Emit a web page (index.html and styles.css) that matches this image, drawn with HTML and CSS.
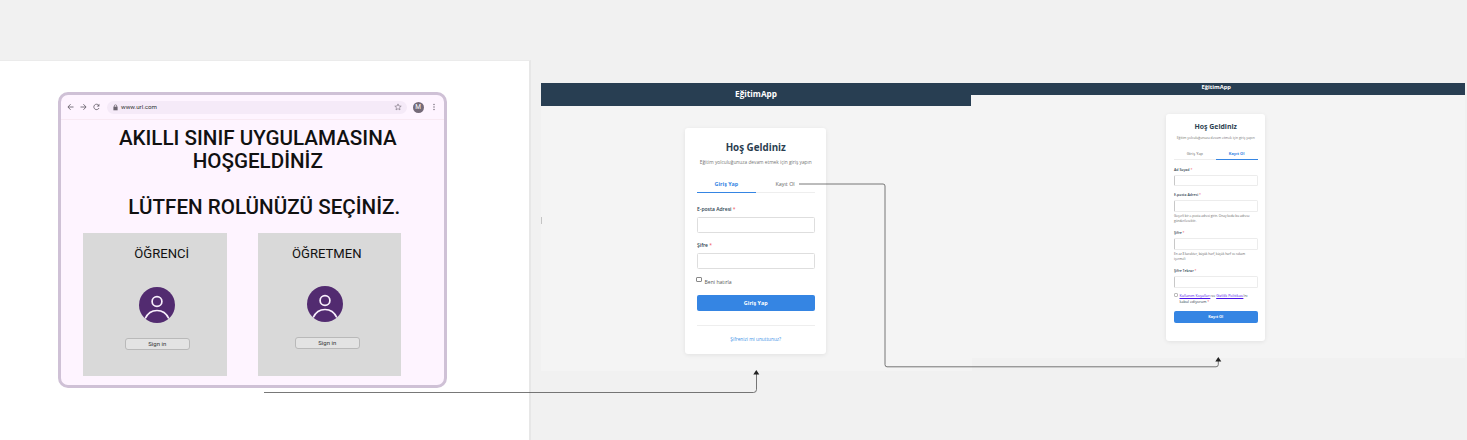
FILE: index.html
```html
<!DOCTYPE html>
<html lang="tr">
<head>
<meta charset="utf-8">
<title>EğitimApp</title>
<link rel="stylesheet" href="styles.css">
</head>
<body>
<main class="canvas">
  <section class="board">
    <div class="browser">
      <div class="toolbar">
        <svg class="nav" viewBox="0 0 36 10"><g fill="none" stroke="#6b646f" stroke-width=".9"><path d="M6.500 5H1M3.600 2.200.9 5l2.700 2.800M13.500 5H19M16.400 2.200 19.100 5l-2.700 2.800"/><path d="M31.600 3.200A2.700 2.700 0 1 0 32 6"/></g><path fill="#6b646f" d="M32.400 1.800v2.700h-2.700z"/></svg>
        <div class="url">
          <svg class="lock" viewBox="0 0 5 7"><path fill="#6b646f" d="M.4 2.700h4.200v3.600H.4z"/><path d="M1.300 3V2a1.200 1.200 0 0 1 2.400 0v1" fill="none" stroke="#6b646f" stroke-width=".7"/></svg>
          <span>www.url.com</span>
          <svg class="star" viewBox="0 0 8 8"><path d="m4 .9.900 2.100 2.300.2-1.700 1.500.5 2.200-2-1.200-2 1.200.5-2.200L.8 3.200l2.300-.2z" fill="none" stroke="#857d89" stroke-width=".7"/></svg>
        </div>
        <div class="user">M</div>
        <svg class="dots" viewBox="0 0 4 8" fill="#6b646f"><circle cx="2" cy="1.500" r=".7"/><circle cx="2" cy="4" r=".7"/><circle cx="2" cy="6.500" r=".7"/></svg>
      </div>
      <h1 class="welcome">AKILLI SINIF UYGULAMASINA<br>HOŞGELDİNİZ</h1>
      <h2 class="prompt">LÜTFEN ROLÜNÜZÜ SEÇİNİZ.</h2>
      <div class="roles">
        <div class="role student">
          <h3>ÖĞRENCİ</h3>
          <svg class="avatar" viewBox="0 0 36 36"><circle cx="18" cy="18" r="18" fill="#522b70"/><g fill="none" stroke="#f8effc" stroke-width="1.700"><circle cx="18" cy="14.500" r="4.900"/><path d="M6.200 31.500C8.500 26.500 12.800 23.500 18 23.500s9.500 3 11.800 8"/></g></svg>
          <button class="signin">Sign in</button>
        </div>
        <div class="role teacher">
          <h3>ÖĞRETMEN</h3>
          <svg class="avatar" viewBox="0 0 36 36"><circle cx="18" cy="18" r="18" fill="#522b70"/><g fill="none" stroke="#f8effc" stroke-width="1.700"><circle cx="18" cy="14.500" r="4.900"/><path d="M6.200 31.500C8.500 26.500 12.800 23.500 18 23.500s9.500 3 11.800 8"/></g></svg>
          <button class="signin">Sign in</button>
        </div>
      </div>
    </div>
  </section>

  <section class="app login">
    <header class="appbar">EğitimApp</header>
    <i class="handle"></i>
    <div class="card">
      <h2 class="title">Hoş Geldiniz</h2>
      <p class="sub">Eğitim yolculuğunuza devam etmek için giriş yapın</p>
      <div class="tabs"><span class="tab active">Giriş Yap</span><span class="tab">Kayıt Ol</span></div>
      <label class="label">E-posta Adresi <b>*</b></label>
      <div class="input"></div>
      <label class="label">Şifre <b>*</b></label>
      <div class="input"></div>
      <div class="check"><i class="box"></i><span>Beni hatırla</span></div>
      <button class="submit">Giriş Yap</button>
      <div class="foot"><a>Şifrenizi mi unuttunuz?</a></div>
    </div>
  </section>

  <section class="app signup">
    <header class="appbar">EğitimApp</header>
    <div class="card">
      <h2 class="title">Hoş Geldiniz</h2>
      <p class="sub">Eğitim yolculuğunuza devam etmek için giriş yapın</p>
      <div class="tabs"><span class="tab">Giriş Yap</span><span class="tab active">Kayıt Ol</span></div>
      <label class="label">Ad Soyad <b>*</b></label>
      <div class="input"></div>
      <label class="label">E-posta Adresi <b>*</b></label>
      <div class="input"></div>
      <p class="help">Geçerli bir e-posta adresi girin. Onay kodu bu adrese<br>gönderilecektir.</p>
      <label class="label after-help">Şifre <b>*</b></label>
      <div class="input"></div>
      <p class="help">En az 8 karakter, büyük harf, küçük harf ve rakam<br>içermeli</p>
      <label class="label after-help">Şifre Tekrar <b>*</b></label>
      <div class="input"></div>
      <div class="check"><i class="box"></i><span><a>Kullanım Koşulları</a> ve <a>Gizlilik Politikası</a>'nı<br>kabul ediyorum <b>*</b></span></div>
      <button class="submit">Kayıt Ol</button>
    </div>
  </section>

  <svg class="links" viewBox="0 0 1467 440" fill="none" stroke="#555" stroke-width=".8">
    <path d="M264 392.500H753.500Q756.500 392.500 756.500 389.500V373"/>
    <path d="M799 184H883Q885 184 885 186V364.500Q885 366.800 887 366.800H1216Q1218.300 366.800 1218.300 364.500V360"/>
    <path fill="#222" stroke="none" d="m753.300 374.500 3-4.500 3 4.500zM1215.300 361.500l3-4.500 3 4.500z"/>
  </svg>
</main>
</body>
</html>
```
FILE: styles.css
```css
* { box-sizing: border-box; }
body { margin: 0; }
h1, h2, h3, p { margin: 0; }
button { padding: 0; border: 0; font-family: inherit; }
svg { display: block; flex: none; }
.canvas { position: relative; width: 1467px; height: 440px; overflow: hidden; background: #f1f1f1; }
.links { position: absolute; left: 0; top: 0; width: 1467px; height: 440px; }

.board { position: absolute; left: 0; top: 60px; width: 531px; height: 390px; padding: 32px 0 0 57.500px; background: #fff; border-top: 1px solid #ebebeb; border-right: 2px solid #e7e7e7; font-family: Roboto, sans-serif; }
.browser { width: 389.500px; height: 296px; margin-top: -1px; border: 3px solid #cfc1d6; border-radius: 10px; background: #fef4ff; color: #111; }
.toolbar { display: flex; align-items: center; height: 25px; padding-left: 6px; border-bottom: 1px solid #f8e9f3; }
.nav { width: 36px; height: 10px; }
.url { display: flex; align-items: center; width: 300px; height: 13px; margin-left: 4px; padding: 0 5px 0 6px; border-radius: 7px; background: #f5eaf8; font-size: 6.200px; color: #333; }
.lock { width: 5px; height: 7px; margin-right: 3.500px; }
.star { width: 8px; height: 8px; margin-left: auto; }
.user { width: 11px; height: 11px; margin-left: 6px; border-radius: 50%; background: #756a79; color: #fff; font-size: 6.500px; line-height: 11px; text-align: center; }
.dots { width: 4px; height: 8px; margin-left: 8px; }
.welcome, .prompt { font-size: 20.600px; line-height: 23px; font-weight: 500; text-align: center; white-space: nowrap; }
.welcome { margin-top: 7px; padding-left: 11px; }
.prompt { margin-top: 23px; padding-left: 24px; }
.roles { display: flex; gap: 31px; margin: 13.500px 0 0 22.500px; }
.role { display: flex; flex-direction: column; align-items: center; width: 143.500px; height: 143.500px; background: #d9d9d9; padding-top: 12px; }
.role h3 { font-size: 13.100px; line-height: 17px; font-weight: 400; }
.student h3 { margin-left: 14px; }
.teacher h3 { margin-left: -5px; }
.avatar { width: 36px; height: 36px; margin-top: 25.500px; }
.student .avatar, .student .signin { margin-left: 5px; }
.teacher .avatar { margin-top: 24.500px; margin-left: -8px; }
.signin { width: 65px; height: 12px; margin-top: 15px; border: 1px solid #b9b9b9; border-radius: 3px; background: #e3e3e3; color: #333; font-size: 6px; line-height: 10px; }
.teacher .signin { margin-left: -4px; }

.app { position: absolute; top: 82.500px; overflow: hidden; background: #f4f4f4; color: #2b3e50; font-family: "Open Sans", "Noto Sans", sans-serif; white-space: nowrap; }
.appbar { background: #283e52; color: #fff; font-weight: 700; text-align: center; }
.card { display: flex; flex-direction: column; background: #fff; border-radius: 3px; box-shadow: 0 1px 4px rgba(0,0,0,.08); }
.title { font-weight: 700; text-align: center; }
.sub { align-self: center; color: #777; }
.tabs { display: flex; border-bottom: 1px solid #eee; color: #666; }
.tab { flex: 1; text-align: center; }
.tab.active { color: #3585e3; font-weight: 700; border-bottom: 1px solid #3585e3; margin-bottom: -1px; }
.label b, .check b { color: #f0505a; font-weight: 400; }
.label { font-weight: 600; }
.input { border: 1px solid #dedede; border-radius: 1.500px; background: #fff; }
.check { display: flex; }
.box { border: 1px solid #888; border-radius: 1px; background: #fff; }
.submit { background: #3585e3; border-radius: 2px; color: #fff; font-weight: 700; text-align: center; }

.login { left: 540.500px; width: 431px; height: 288px; }
.login .appbar { height: 23px; font-size: 8.200px; line-height: 22px; }
.handle { position: absolute; left: 0; top: 134px; width: 1.500px; height: 7px; background: #c4c4c4; }
.login .card { width: 141px; height: 226px; margin: 22.500px 0 0 144.500px; padding: 11.500px 11.500px 0 12px; }
.login .title { font-size: 9.800px; line-height: 16px; }
.login .sub { margin-top: 3.500px; font-size: 4.800px; line-height: 7px; }
.login .tabs { height: 14px; margin-top: 12.500px; font-size: 5.400px; line-height: 11px; }
.login .label { margin-top: 12.500px; font-size: 5px; line-height: 8px; }
.login .input { height: 16px; margin-top: 3.500px; }
.login .input + .label { margin-top: 8.500px; }
.login .check { margin: 8px 0 0 -1px; gap: 3px; height: 10px; font-size: 5.100px; line-height: 11px; color: #555; }
.login .box { width: 5.500px; height: 5.500px; }
.login .submit { height: 16px; margin-top: 8px; font-size: 5.400px; line-height: 16px; }
.foot { margin-top: 14px; padding-top: 9px; border-top: 1px solid #eee; color: #3f94e8; font-size: 4.750px; line-height: 8px; text-align: center; }

.signup { left: 971px; width: 493.500px; height: 275px; }
.signup .appbar { height: 12.500px; font-size: 5.800px; line-height: 8.500px; padding-right: 3px; }
.signup .card { width: 99px; height: 227px; margin: 18.500px 0 0 195px; padding: 7.500px 7.500px 0 8px; }
.signup .title { font-size: 6.900px; line-height: 12px; }
.signup .sub { margin-top: 1.500px; font-size: 3.350px; line-height: 5px; }
.signup .tabs { height: 10px; margin-top: 10px; font-size: 4px; line-height: 7px; }
.signup .label { margin-top: 7px; font-size: 3.500px; line-height: 6px; }
.signup .input { height: 11.500px; margin-top: 2px; border-color: #ececec; border-left-color: #c8c8c8; }
.signup .input + .label { margin-top: 6px; }
.help { margin-top: 2px; font-size: 3.100px; line-height: 5px; color: #666; }
.signup .after-help { margin-top: 6.500px; }
.signup .check { margin-top: 5.500px; gap: 1.500px; height: 12px; font-size: 3.700px; line-height: 6px; }
.signup .box { width: 4px; height: 4px; border-color: #bbb; }
.check a { color: #4a12e8; text-decoration: underline; }
.signup .submit { height: 12px; margin-top: 6px; font-size: 3.800px; line-height: 12px; }
```
